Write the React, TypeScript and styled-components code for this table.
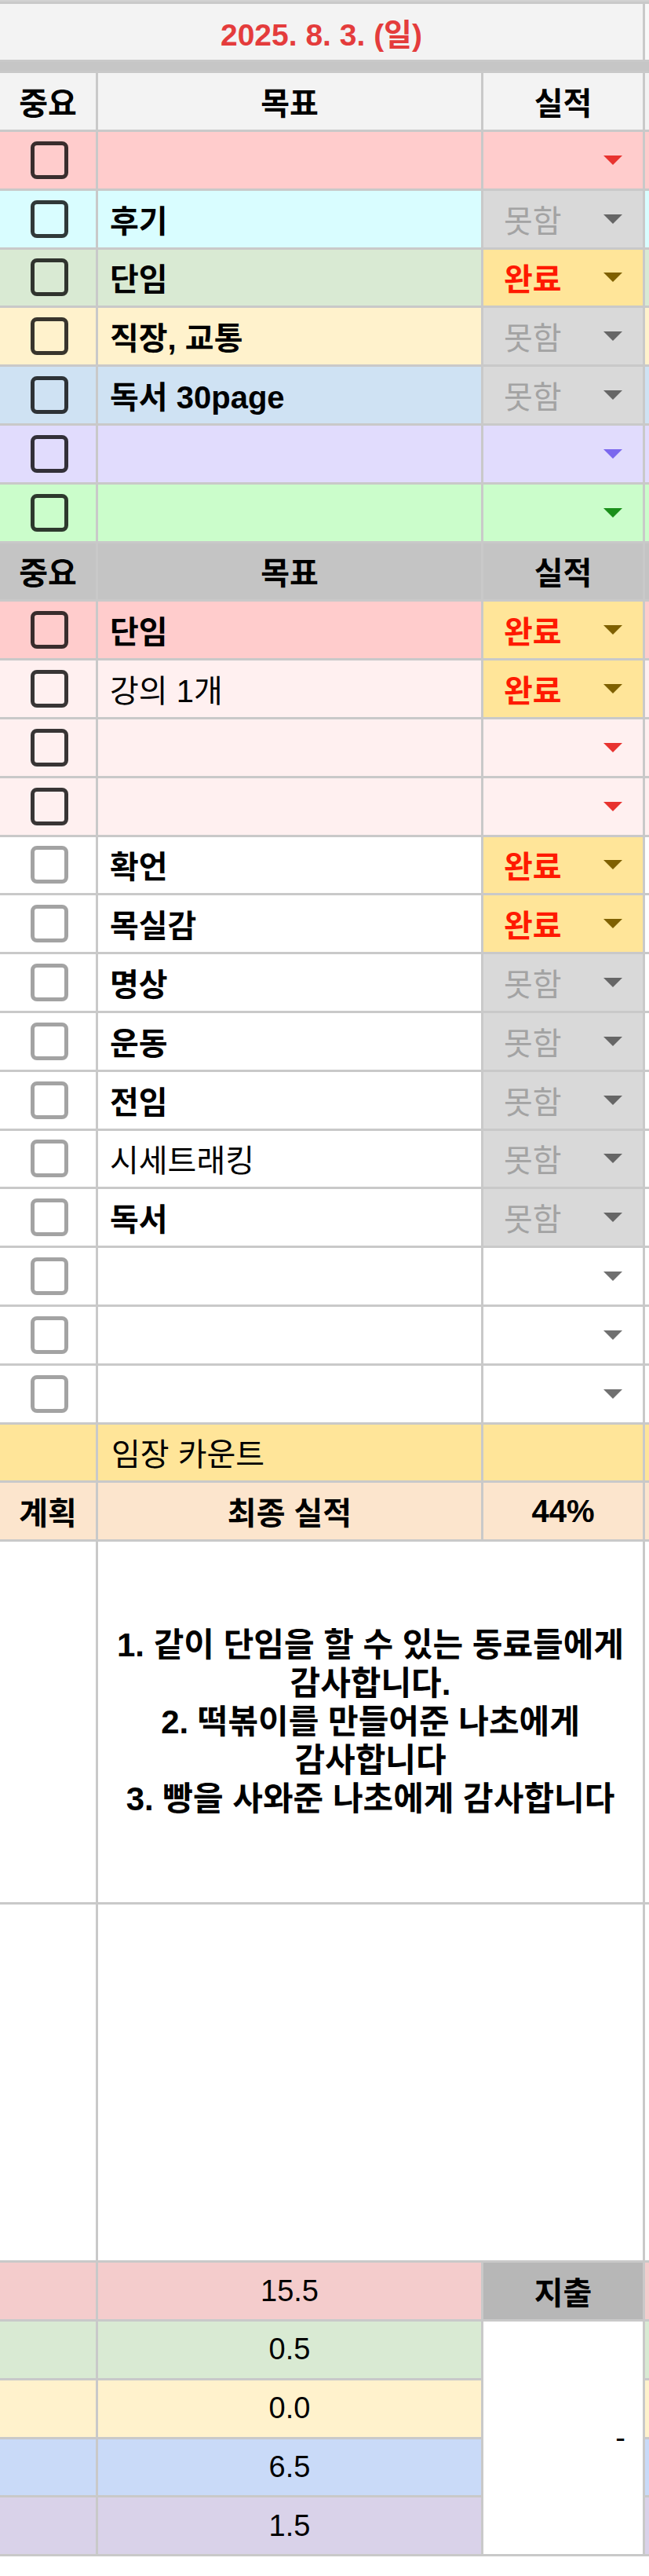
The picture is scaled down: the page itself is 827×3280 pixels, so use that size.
import styled, { createGlobalStyle } from "styled-components";

type Status = "done" | "miss" | "none";

interface IGoal {
  text?: string;
  bg: string;
  status: Status;
  arrow?: string;
  box: "dark" | "light";
  light?: boolean;
}

const LINE = "#c9c9c9";
const WHITE = "#ffffff";
const PINK = "#ffcccc";
const PALE_PINK = "#fff0f0";
const RED_ARROW = "#e8332f";
const GRAY_ARROW = "#707070";

const TOP_GOALS: IGoal[] = [
  { bg: PINK, status: "none", arrow: RED_ARROW, box: "dark" },
  { text: "후기", bg: "#d9fdff", status: "miss", box: "dark" },
  { text: "단임", bg: "#d9ead3", status: "done", box: "dark" },
  { text: "직장, 교통", bg: "#fff2cc", status: "miss", box: "dark" },
  { text: "독서 30page", bg: "#cfe2f3", status: "miss", box: "dark" },
  { bg: "#e1dcfd", status: "none", arrow: "#7b68ee", box: "dark" },
  { bg: "#cbfdcb", status: "none", arrow: "#1b8f1b", box: "dark" },
];

const DAILY_GOALS: IGoal[] = [
  { text: "단임", bg: PINK, status: "done", box: "dark" },
  { text: "강의 1개", bg: PALE_PINK, status: "done", box: "dark", light: true },
  { bg: PALE_PINK, status: "none", arrow: RED_ARROW, box: "dark" },
  { bg: PALE_PINK, status: "none", arrow: RED_ARROW, box: "dark" },
  { text: "확언", bg: WHITE, status: "done", box: "light" },
  { text: "목실감", bg: WHITE, status: "done", box: "light" },
  { text: "명상", bg: WHITE, status: "miss", box: "light" },
  { text: "운동", bg: WHITE, status: "miss", box: "light" },
  { text: "전임", bg: WHITE, status: "miss", box: "light" },
  { text: "시세트래킹", bg: WHITE, status: "miss", box: "light", light: true },
  { text: "독서", bg: WHITE, status: "miss", box: "light" },
  { bg: WHITE, status: "none", arrow: GRAY_ARROW, box: "light" },
  { bg: WHITE, status: "none", arrow: GRAY_ARROW, box: "light" },
  { bg: WHITE, status: "none", arrow: GRAY_ARROW, box: "light" },
];

const HOURS = [
  { value: "15.5", bg: "#f4cccc" },
  { value: "0.5", bg: "#d9ead3" },
  { value: "0.0", bg: "#fff2cc" },
  { value: "6.5", bg: "#c9daf8" },
  { value: "1.5", bg: "#d9d2e9" },
];

const GlobalStyle = createGlobalStyle`
  body {
    margin: 0;
    background: #ffffff;
    font-family: "Liberation Sans", "Noto Sans CJK KR", sans-serif;
  }
`;

const Sheet = styled.div`
  width: 827px;
  display: grid;
  grid-template-columns: 122px 488px 203px 5px;
  grid-template-rows: 2px 71px 11px 72px repeat(24, 71.8px) 459px 453px repeat(5, 71.8px);
  gap: 3px;
  padding-bottom: 3px;
  background: ${LINE};
  color: #000;
  font-size: 40px;
`;

const TopBand = styled.div`
  grid-column: 1 / 5;
  background: #d2d2d2;
`;

const DateCell = styled.div`
  grid-column: 1 / 4;
  display: flex;
  align-items: center;
  justify-content: center;
  background: #f3f3f3;
  color: #e43c3c;
  font-size: 39px;
  font-weight: 700;
`;

const FreezeBar = styled.div`
  grid-column: 1 / 5;
  background: #c6c6c6;
`;

const Edge = styled.div<{ $bg: string }>`
  background: ${(p) => p.$bg};
`;

const HeadCell = styled.div<{ $bg: string }>`
  display: flex;
  align-items: center;
  justify-content: center;
  background: ${(p) => p.$bg};
  font-weight: 700;
`;

const BoxCell = styled.div<{ $bg: string }>`
  display: flex;
  align-items: center;
  justify-content: center;
  background: ${(p) => p.$bg};
`;

const CheckBox = styled.span<{ $tone: "dark" | "light" }>`
  box-sizing: border-box;
  width: 48px;
  height: 48px;
  margin-left: 3px;
  border: 5px solid
    ${(p) => (p.$tone === "dark" ? "rgba(0, 0, 0, 0.78)" : "rgba(0, 0, 0, 0.36)")};
  border-radius: 8px;
`;

const GoalCell = styled.div<{ $bg: string; $light?: boolean }>`
  display: flex;
  align-items: center;
  padding-left: 15px;
  background: ${(p) => p.$bg};
  font-weight: ${(p) => (p.$light ? 400 : 700)};
  white-space: nowrap;
`;

const StatusCell = styled.div<{ $bg: string }>`
  display: flex;
  align-items: center;
  justify-content: space-between;
  padding: 0 26px;
  background: ${(p) => p.$bg};
`;

const Chip = styled.span<{ $done: boolean }>`
  color: ${(p) => (p.$done ? "#ff1a00" : "#a3a3a3")};
  font-weight: ${(p) => (p.$done ? 700 : 400)};
`;

const Arrow = styled.svg`
  margin-left: auto;
  flex: none;
`;

const SumCell = styled.div<{ $bg: string; $bold?: boolean }>`
  display: flex;
  align-items: center;
  justify-content: center;
  background: ${(p) => p.$bg};
  font-weight: ${(p) => (p.$bold ? 700 : 400)};
`;

const HourCell = styled(SumCell)`
  font-size: 38px;
`;

const NoteCell = styled.div`
  grid-column: 2 / 4;
  display: flex;
  align-items: center;
  justify-content: center;
  background: #ffffff;
  text-align: center;
  font-size: 42px;
  font-weight: 700;
  line-height: 49px;
  white-space: nowrap;
`;

const BlankCell = styled.div`
  background: #ffffff;
`;

const WideBlank = styled(BlankCell)`
  grid-column: 2 / 4;
`;

const SpendValue = styled.div`
  grid-row: span 4;
  display: flex;
  align-items: center;
  justify-content: flex-end;
  padding-right: 22px;
  background: #ffffff;
  font-size: 38px;
`;

const CountLabel = styled(GoalCell)`
  padding-left: 17px;
`;

const STATUS_BG: Record<Status, string | null> = {
  done: "#ffe599",
  miss: "#d9d9d9",
  none: null,
};

const ARROW_FOR: Record<Status, string | null> = {
  done: "#7f6000",
  miss: "#666666",
  none: null,
};

const DropArrow = ({ color }: { color: string }) => (
  <Arrow width="24" height="12" viewBox="0 0 24 12">
    <path d="M0 0 H24 L12 12 Z" fill={color} />
  </Arrow>
);

const Header = ({ bg }: { bg: string }) => (
  <>
    <HeadCell $bg={bg}>중요</HeadCell>
    <HeadCell $bg={bg}>목표</HeadCell>
    <HeadCell $bg={bg}>실적</HeadCell>
    <Edge $bg={bg} />
  </>
);

const GoalRow = ({ goal }: { goal: IGoal }) => {
  const cellBg = STATUS_BG[goal.status] ?? goal.bg;
  const arrow = ARROW_FOR[goal.status] ?? goal.arrow ?? GRAY_ARROW;
  return (
    <>
      <BoxCell $bg={goal.bg}>
        <CheckBox $tone={goal.box} />
      </BoxCell>
      <GoalCell $bg={goal.bg} $light={goal.light}>
        {goal.text}
      </GoalCell>
      <StatusCell $bg={cellBg}>
        {goal.status === "done" && <Chip $done>완료</Chip>}
        {goal.status === "miss" && <Chip $done={false}>못함</Chip>}
        <DropArrow color={arrow} />
      </StatusCell>
      <Edge $bg={goal.bg} />
    </>
  );
};

const App = () => {
  return (
    <>
      <GlobalStyle />
      <Sheet>
        <TopBand />
        <DateCell>2025. 8. 3. (일)</DateCell>
        <Edge $bg="#f8f8f8" />
        <FreezeBar />

        <Header bg="#f3f3f3" />
        {TOP_GOALS.map((goal, i) => (
          <GoalRow key={`top-${i}`} goal={goal} />
        ))}

        <Header bg="#c4c4c4" />
        {DAILY_GOALS.map((goal, i) => (
          <GoalRow key={`daily-${i}`} goal={goal} />
        ))}

        {/* 임장 카운트 */}
        <SumCell $bg="#ffe599" />
        <CountLabel $bg="#ffe599" $light>
          임장 카운트
        </CountLabel>
        <SumCell $bg="#ffe599" />
        <Edge $bg="#ffe599" />

        {/* 최종 실적 */}
        <SumCell $bg="#fce5cd" $bold>
          계획
        </SumCell>
        <SumCell $bg="#fce5cd" $bold>
          최종 실적
        </SumCell>
        <SumCell $bg="#fce5cd" $bold>
          44%
        </SumCell>
        <Edge $bg="#fce5cd" />

        {/* 감사일기 */}
        <BlankCell />
        <NoteCell>
          <div>
            1. 같이 단임을 할 수 있는 동료들에게
            <br />
            감사합니다.
            <br />
            2. 떡볶이를 만들어준 나초에게
            <br />
            감사합니다
            <br />
            3. 빵을 사와준 나초에게 감사합니다
          </div>
        </NoteCell>
        <Edge $bg="#ffffff" />

        <BlankCell />
        <WideBlank />
        <Edge $bg="#ffffff" />

        {/* 시간 / 지출 */}
        {HOURS.map((row, i) => (
          <>
            <HourCell key={`h1-${i}`} $bg={row.bg} />
            <HourCell key={`h2-${i}`} $bg={row.bg}>
              {row.value}
            </HourCell>
            {i === 0 && (
              <SumCell key="spend" $bg="#b7b7b7" $bold>
                지출
              </SumCell>
            )}
            {i === 1 && <SpendValue key="spend-v">-</SpendValue>}
            <Edge key={`h4-${i}`} $bg={row.bg} />
          </>
        ))}
      </Sheet>
    </>
  );
};

export default App;
